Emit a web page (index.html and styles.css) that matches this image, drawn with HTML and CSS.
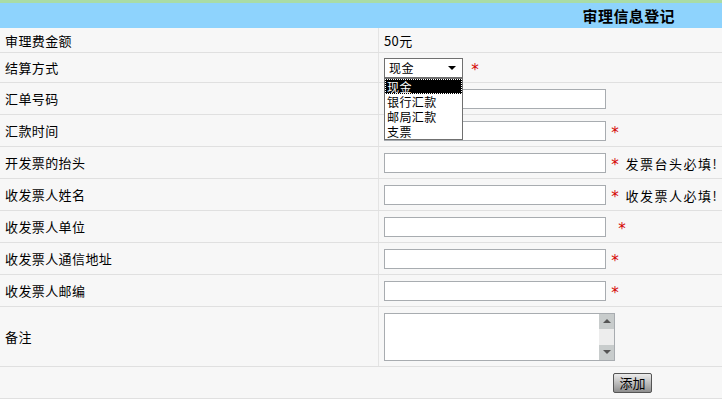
FILE: index.html
```html
<!DOCTYPE html>
<html lang="zh-CN">
<head>
  <meta charset="UTF-8" />
  <title>审理信息登记</title>
  <link rel="stylesheet" href="styles.css">
</head>
<body>

  <div class="topbar"></div>

  <table class="form-table">
    <tr class="head-row">
      <th colspan="2">审理信息登记</th>
    </tr>
    <tr class="row-short">
      <td class="label">审理费金额</td>
      <td class="field">50元</td>
    </tr>
    <tr class="row-select">
      <td class="label">结算方式</td>
      <td class="field">
        <span class="select-wrap">
          <span class="select-box">现金<span class="arrow"></span></span>
          <div class="select-list">
            <div class="opt active">现金</div>
            <div class="opt">银行汇款</div>
            <div class="opt">邮局汇款</div>
            <div class="opt">支票</div>
          </div>
        </span>
        <span class="star">*</span>
      </td>
    </tr>
    <tr>
      <td class="label">汇单号码</td>
      <td class="field"><input type="text" class="text-in"></td>
    </tr>
    <tr>
      <td class="label">汇款时间</td>
      <td class="field"><input type="text" class="text-in"> <span class="star">*</span></td>
    </tr>
    <tr>
      <td class="label">开发票的抬头</td>
      <td class="field"><input type="text" class="text-in"> <span class="star">*</span> <span class="hint">发票台头必填!</span></td>
    </tr>
    <tr>
      <td class="label">收发票人姓名</td>
      <td class="field"><input type="text" class="text-in"> <span class="star">*</span> <span class="hint">收发票人必填!</span></td>
    </tr>
    <tr>
      <td class="label">收发票人单位</td>
      <td class="field"><input type="text" class="text-in"> <span class="star wide">*</span></td>
    </tr>
    <tr>
      <td class="label">收发票人通信地址</td>
      <td class="field"><input type="text" class="text-in"> <span class="star">*</span></td>
    </tr>
    <tr>
      <td class="label">收发票人邮编</td>
      <td class="field"><input type="text" class="text-in"> <span class="star">*</span></td>
    </tr>
    <tr class="row-tall">
      <td class="label">备注</td>
      <td class="field">
        <div class="memo">
          <textarea class="memo-text"></textarea>
          <div class="scrollbar">
            <div class="sb-btn"><span class="tri-up"></span></div>
            <div class="sb-track"></div>
            <div class="sb-btn"><span class="tri-down"></span></div>
          </div>
        </div>
      </td>
    </tr>
    <tr class="foot-row">
      <td colspan="2"><button class="add-btn">添加</button></td>
    </tr>
  </table>

</body>
</html>
```

FILE: styles.css
```css
body {
  margin: 0;
  padding: 0;
  background: #f7f7f7;
  font-family: "Noto Sans CJK SC", "DejaVu Sans", sans-serif;
  font-size: 13px;
  letter-spacing: 0.4px;
  color: #000;
}

.topbar {
  height: 3px;
  background: #a9dca6;
}

.form-table {
  width: 100%;
  border-collapse: collapse;
}

.form-table td {
  height: 31px;
  padding: 0 0 0 5px;
  border-bottom: 1px solid #e0e0e0;
  vertical-align: middle;
}

.head-row th {
  height: 25px;
  padding: 0 47px 0 0;
  background: #8ed3fd;
  text-align: right;
  font-size: 15px;
  font-weight: bold;
}

.row-short td {
  height: 24px;
}

.row-select td {
  height: 29px;
}

.row-tall td {
  height: 59px;
}

.label {
  width: 373px;
  border-right: 1px solid #e4e4e4;
}

.field {
  white-space: nowrap;
}

.text-in {
  width: 218px;
  height: 16px;
  margin: 0;
  padding: 1px;
  border: 1px solid #a8acb0;
  background: #fff;
  vertical-align: middle;
}

.star {
  display: inline-block;
  margin-left: 2px;
  color: #d40000;
  font-family: "DejaVu Sans", sans-serif;
  font-size: 15px;
  line-height: 12px;
  vertical-align: middle;
  position: relative;
  top: 2px;
}

.star.wide {
  margin-left: 9px;
}

.hint {
  margin-left: 3px;
  letter-spacing: 1.5px;
  vertical-align: middle;
}

.select-wrap {
  position: relative;
  display: inline-block;
  vertical-align: middle;
}

.select-box {
  display: block;
  box-sizing: border-box;
  width: 79px;
  height: 20px;
  padding: 0 0 0 4px;
  border: 1px solid #707070;
  background: #fff;
  line-height: 18px;
  font-size: 12px;
  position: relative;
}

.arrow {
  position: absolute;
  right: 6px;
  top: 7px;
  border-left: 4px solid transparent;
  border-right: 4px solid transparent;
  border-top: 4px solid #000;
}

.select-list {
  position: absolute;
  left: 0;
  top: 20px;
  box-sizing: border-box;
  width: 79px;
  border: 1px solid #707070;
  background: #fff;
  z-index: 5;
  font-size: 12px;
}

.opt {
  height: 15px;
  line-height: 15px;
  padding-left: 2px;
}

.opt.active {
  background: #000;
  color: #fff;
  outline: 1px dotted #fff;
  outline-offset: -1px;
}

.select-wrap + .star {
  margin-left: 5px;
}

.memo {
  display: flex;
  width: 231px;
  height: 48px;
  box-sizing: border-box;
  border: 1px solid #a8acb0;
  background: #fff;
}

.memo-text {
  flex: 1;
  border: none;
  margin: 0;
  padding: 0;
  resize: none;
  outline: none;
  background: #fff;
}

.scrollbar {
  width: 15px;
  display: flex;
  flex-direction: column;
  background: #ededed;
}

.sb-btn {
  height: 15px;
  background: #c8cccc;
  display: flex;
  align-items: center;
  justify-content: center;
}

.sb-track {
  flex: 1;
}

.tri-up {
  border-left: 4px solid transparent;
  border-right: 4px solid transparent;
  border-bottom: 4px solid #555;
}

.tri-down {
  border-left: 4px solid transparent;
  border-right: 4px solid transparent;
  border-top: 4px solid #555;
}

.foot-row td {
  text-align: right;
  padding: 0 70px 0 0;
}

.add-btn {
  width: 39px;
  height: 20px;
  padding: 0;
  border: 1px solid #555;
  border-radius: 2px;
  background: linear-gradient(#ececec, #b4b4b4 60%, #8e8e8e);
  font-family: inherit;
  font-size: 13px;
  letter-spacing: 0;
  line-height: 16px;
  color: #000;
}
```
